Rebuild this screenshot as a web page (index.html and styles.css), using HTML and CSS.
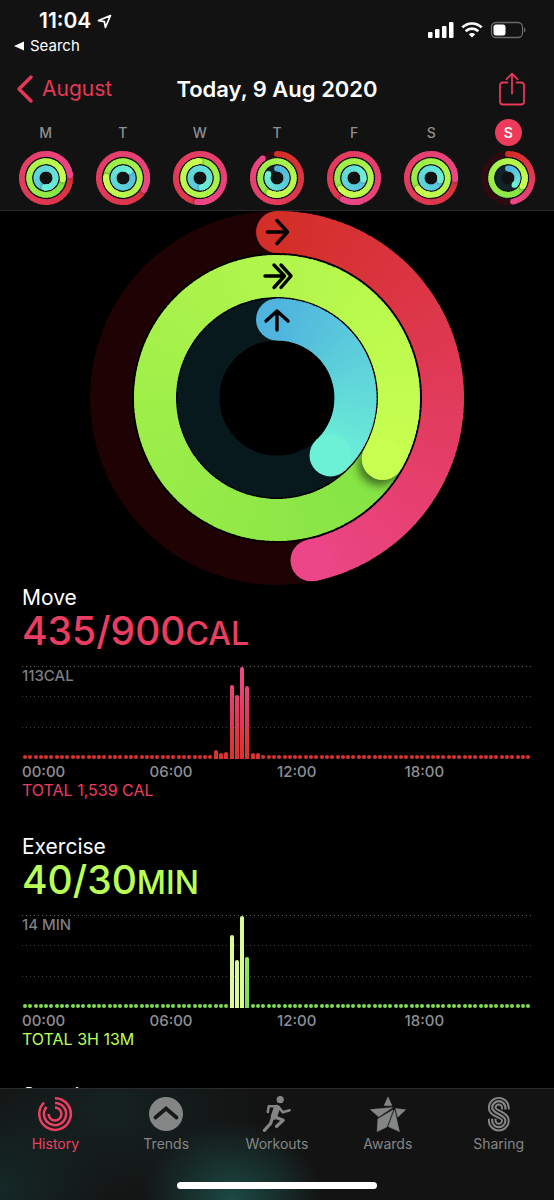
FILE: index.html
```html
<!DOCTYPE html>
<html lang="en">
<head>
	<meta charset="UTF-8">
	<meta name="viewport" content="width=device-width, initial-scale=1">
	<title>Activity</title>
	<link rel="stylesheet" href="styles.css">
</head>
<body>

	<header class="header">
		<div class="status">
			<div class="status-left">
				<div class="clock">
					<span>11:04</span>
					<svg width="15" height="15" viewBox="0 0 15 15"><path d="M13.5 1.5 L1.5 6.6 L7.4 7.6 L8.4 13.5 Z" fill="none" stroke="#fff" stroke-width="1.7" stroke-linejoin="round"/></svg>
				</div>
				<a class="back-app" href="#">
					<svg width="10" height="10" viewBox="0 0 10 10"><path d="M0 5 L10 0.5 V9.5 Z" fill="#fff"/></svg>
					<span>Search</span>
				</a>
			</div>
			<svg class="status-icons" width="98" height="18" viewBox="0 0 98 18">
				<g fill="#fff">
					<rect x="0" y="11" width="4.5" height="6" rx="1"/>
					<rect x="7" y="8" width="4.5" height="9" rx="1"/>
					<rect x="14" y="5" width="4.5" height="12" rx="1"/>
					<rect x="21" y="1" width="4.5" height="16" rx="1"/>
					<path d="M44 16.5 L40.8 13.2 A4.6 4.6 0 0 1 47.2 13.2 Z"/>
				</g>
				<g fill="none" stroke="#fff" stroke-width="2.7">
					<path d="M37.7 10.2 A9 9 0 0 1 50.3 10.2"/>
					<path d="M34.3 6.4 A14 14 0 0 1 53.7 6.4"/>
				</g>
				<rect x="63.5" y="1.5" width="31" height="15" rx="4.5" fill="none" stroke="#6a6a6a" stroke-width="1.3"/>
				<rect x="65.5" y="3.5" width="12" height="11" rx="2.5" fill="#fff"/>
				<path d="M96 6.5 A2.8 2.8 0 0 1 96 11.5 Z" fill="#6a6a6a"/>
			</svg>
		</div>

		<nav class="nav">
			<a class="nav-back" href="#">
				<svg width="17" height="28" viewBox="0 0 17 28"><path d="M15 2 L3 14 L15 26" fill="none" stroke="currentColor" stroke-width="3.4" stroke-linecap="round" stroke-linejoin="round"/></svg>
				<span>August</span>
			</a>
			<h1 class="nav-title">Today, 9 Aug 2020</h1>
			<button class="nav-share" type="button" aria-label="Share">
				<svg width="28" height="34" viewBox="0 0 28 34"><path d="M9.5 10.5 H5 A3 3 0 0 0 2 13.5 V29.5 A3 3 0 0 0 5 32.5 H23 A3 3 0 0 0 26 29.5 V13.5 A3 3 0 0 0 23 10.5 H18.5 M14 21.5 V2 M8.5 7.2 L14 1.7 L19.5 7.2" fill="none" stroke="currentColor" stroke-width="1.8" stroke-linecap="round" stroke-linejoin="round"/></svg>
			</button>
		</nav>

		<!-- data-ends: how far move, exercise and stand have gone, in degrees -->
		<div class="week">
			<button class="day" type="button"><span class="day-name">M</span><svg class="day-rings" data-ends="444,455,550"></svg></button>
			<button class="day" type="button"><span class="day-name">T</span><svg class="day-rings" data-ends="480,635,405"></svg></button>
			<button class="day" type="button"><span class="day-name">W</span><svg class="day-rings" data-ends="547,719,530"></svg></button>
			<button class="day" type="button"><span class="day-name">T</span><svg class="day-rings" data-ends="324,568,295"></svg></button>
			<button class="day" type="button"><span class="day-name">F</span><svg class="day-rings" data-ends="568,592,460"></svg></button>
			<button class="day" type="button"><span class="day-name">S</span><svg class="day-rings" data-ends="453,592,465"></svg></button>
			<button class="day" type="button"><span class="day-name day-today">S</span><svg class="day-rings" data-ends="168,480,137"></svg></button>
		</div>
	</header>

	<main class="content">
		<svg class="rings" data-ends="168,480,137"></svg>

		<section class="metric move">
			<h2>Move</h2>
			<p class="amount">435/900<span>CAL</span></p>
			<div class="chart">
				<span class="chart-max">113CAL</span>
				<div class="bars" data-bars="36:9,37:6,38:7,39:74,40:64,41:92,42:73,43:6,44:6"></div>
			</div>
			<div class="hours"><span>00:00</span><span>06:00</span><span>12:00</span><span>18:00</span></div>
			<p class="total">TOTAL 1,539 CAL</p>
		</section>

		<section class="metric exercise">
			<h2>Exercise</h2>
			<p class="amount">40/30<span>MIN</span></p>
			<div class="chart">
				<span class="chart-max">14 MIN</span>
				<div class="bars" data-bars="39:73:pale,40:48:pale,41:92:pale,42:51"></div>
			</div>
			<div class="hours"><span>00:00</span><span>06:00</span><span>12:00</span><span>18:00</span></div>
			<p class="total">TOTAL 3H 13M</p>
		</section>

		<section class="metric stand">
			<h2>Stand</h2>
		</section>
	</main>

	<footer class="footer">
		<nav class="tabs">
			<a class="tab tab-active" href="#">
				<svg viewBox="0 0 36 36" fill="none" stroke="currentColor" stroke-width="2.5">
					<path d="M18 2.2 A15.8 15.8 0 1 1 7 6.7"/>
					<path d="M18 6.9 A11.1 11.1 0 1 1 9.5 10.9"/>
					<path d="M18 11.6 A6.4 6.4 0 1 1 11.6 18"/>
				</svg>
				<span>History</span>
			</a>
			<a class="tab" href="#">
				<svg viewBox="0 0 36 36"><circle cx="18" cy="18" r="17" fill="currentColor"/><path d="M7.5 21.5 L18 12.5 L28.5 21.5" fill="none" stroke="#141a1a" stroke-width="3.8" stroke-linecap="round"/></svg>
				<span>Trends</span>
			</a>
			<a class="tab" href="#">
				<svg viewBox="0 0 36 36" fill="none" stroke="currentColor" stroke-linecap="round" stroke-linejoin="round">
					<circle cx="21.2" cy="3.7" r="3.6" fill="currentColor" stroke="none"/>
					<path d="M8.8 16 L9.8 10.3 L17 10.2 M19.8 11.3 L23.8 16.3 L30.6 14.3" stroke-width="2.6"/>
					<path d="M17.8 12 L15 20.5" stroke-width="6.4"/>
					<path d="M16 21 L24.2 24.3 L17.6 30.3 M13.7 21 L11.5 27.7 L5.4 34.3" stroke-width="3.2"/>
				</svg>
				<span>Workouts</span>
			</a>
			<a class="tab" href="#">
				<svg viewBox="0 0 36 36" fill="currentColor" stroke="currentColor" stroke-width="0.6" stroke-linejoin="round">
					<path d="M18 1 L14.2 9.6 H21.9 Z"/>
					<path d="M0.4 13.6 L22.5 11.6 L8.6 20.8 Z"/>
					<path d="M7.9 22.9 L23 13.9 L16.7 31 L7.2 35.6 Z"/>
					<path d="M24.5 14.2 L29.4 35.6 L18.4 30.6 Z"/>
					<path d="M25.6 12.6 L35.6 13.8 L27.8 21.1 Z"/>
				</svg>
				<span>Awards</span>
			</a>
			<a class="tab" href="#">
				<svg viewBox="0 0 36 36" fill="none">
					<path d="M24.4 13.5 V11.8 A6.6 6.6 0 0 0 11.2 11.8 C11.2 18.2 24.4 18.2 24.4 24.5 A6.6 6.6 0 0 1 11.2 24.5 V22.8" stroke="currentColor" stroke-width="8.6"/>
					<path d="M24.4 14 V11.8 A6.6 6.6 0 0 0 11.2 11.8 C11.2 18.2 24.4 18.2 24.4 24.5 A6.6 6.6 0 0 1 11.2 24.5 V22.3" stroke="#131313" stroke-width="4.8"/>
					<path d="M24.4 13.5 V11.8 A6.6 6.6 0 0 0 11.2 11.8 C11.2 18.2 24.4 18.2 24.4 24.5 A6.6 6.6 0 0 1 11.2 24.5 V22.8" stroke="currentColor" stroke-width="2.2"/>
				</svg>
				<span>Sharing</span>
			</a>
		</nav>
		<div class="home-bar"></div>
	</footer>

	<script src="script.js"></script>
</body>
</html>
```
FILE: styles.css
```css
html {
	height: 100%;
}

body {
	margin: 0;
	height: 100%;
	display: flex;
	flex-direction: column;
	background: #000;
	color: #fff;
	font-family: Inter, "Liberation Sans", sans-serif;
	overflow: hidden;
}

h1, h2, p {
	margin: 0;
	font-weight: 400;
}

a {
	color: inherit;
	text-decoration: none;
}

button {
	margin: 0;
	padding: 0;
	border: 0;
	background: none;
	color: inherit;
	font: inherit;
}

svg {
	display: block;
}

/* header */

.header {
	flex: none;
	background: #121212;
	border-bottom: 1px solid #2b2b2b;
}

.status {
	display: flex;
	justify-content: space-between;
	padding: 8px 28px 0 14px;
}

.clock {
	display: flex;
	align-items: center;
	gap: 6px;
	padding-left: 25px;
	font-size: 21px;
	line-height: 26px;
	font-weight: 600;
}

.back-app {
	display: flex;
	align-items: center;
	gap: 6px;
	font-size: 15px;
	line-height: 24px;
}

.status-icons {
	margin-top: 13px;
}

.nav {
	display: grid;
	grid-template-columns: 1fr auto 1fr;
	align-items: center;
	height: 61px;
	padding: 0 16px;
}

.nav-back {
	display: flex;
	align-items: center;
	gap: 9px;
	color: #e63757;
	font-size: 21px;
}

.nav-title {
	font-size: 22px;
	font-weight: 600;
}

.nav-share {
	justify-self: end;
	margin-right: 12px;
	color: #e63757;
}

.week {
	display: flex;
	padding: 0 7px 5px;
}

.day {
	flex: 1;
	display: flex;
	flex-direction: column;
	align-items: center;
	gap: 5px;
}

.day-name {
	width: 27px;
	line-height: 27px;
	border-radius: 50%;
	color: #8e8e93;
	font-size: 14px;
	font-weight: 500;
}

.day-today {
	background: #ee3a5b;
	color: #fff;
	font-weight: 600;
}

.day-rings {
	width: 54px;
	height: 54px;
}

/* content */

.content {
	flex: 1;
	min-height: 0;
	overflow: hidden;
}

.rings {
	width: 68%;
	max-width: 374px;
	aspect-ratio: 1;
	margin: 0 auto;
}

.metric {
	padding: 0 22px 35px;
}

.metric h2 {
	font-size: 21px;
	line-height: 26px;
}

.amount {
	font-size: 39px;
	line-height: 40px;
	font-weight: 500;
}

.amount span {
	font-size: 32px;
}

.move .amount,
.move .total {
	color: #ea3d60;
}

.exercise .amount,
.exercise .total {
	color: #baff55;
}

.chart {
	position: relative;
	height: 93px;
	margin-top: 12px;
	background:
		repeating-linear-gradient(90deg, #666 0 1px, transparent 1px 4px) 0 0 / 100% 1px no-repeat,
		repeating-linear-gradient(90deg, #444 0 1px, transparent 1px 4px) 0 30px / 100% 1px no-repeat,
		repeating-linear-gradient(90deg, #444 0 1px, transparent 1px 4px) 0 61px / 100% 1px no-repeat;
}

.chart-max {
	position: absolute;
	top: 1px;
	left: 0;
	color: #7d7d82;
	font-size: 15px;
	line-height: 18px;
	font-weight: 500;
}

.bars {
	display: flex;
	justify-content: space-between;
	align-items: flex-end;
	height: 93px;
	padding: 0 1px;
}

.bar {
	width: 4px;
	height: 4px;
	border-radius: 2px;
	background: linear-gradient(0deg, #d9322d, #e5385a 45px, #ec4a8c 92px) bottom / 100% 92px;
}

.bar-tall {
	border-radius: 2px 2px 0 0;
}

.exercise .bar {
	background: linear-gradient(0deg, #7fdc50, #a4f657 92px) bottom / 100% 92px;
}

.exercise .bar-pale {
	background: #dcfb95;
}

.hours {
	display: grid;
	grid-template-columns: repeat(4, 1fr);
	margin-top: 3px;
	color: #8e8e93;
	font-size: 15px;
	line-height: 19px;
	font-weight: 500;
}

.total {
	font-size: 16px;
	line-height: 18px;
}

/* tab bar */

.footer {
	flex: none;
	padding-bottom: 11px;
	border-top: 1px solid #2b2b2b;
	background:
		radial-gradient(90px 80px at 42% 100%, #1c4a44, transparent),
		radial-gradient(110px 90px at 0 90%, #142927, transparent),
		radial-gradient(150px 100px at 20% 20%, #152221, transparent),
		#131313;
}

.tabs {
	display: flex;
}

.tab {
	flex: 1;
	display: flex;
	flex-direction: column;
	align-items: center;
	gap: 2px;
	padding-top: 7px;
	color: #848686;
	font-size: 14px;
	line-height: 20px;
}

.tab svg {
	width: 36px;
	height: 36px;
}

.tab-active {
	color: #ee3f62;
}

.home-bar {
	width: 36%;
	height: 7px;
	margin: 28px auto 0;
	border-radius: 4px;
	background: #fff;
}
```
FILE: script.js
```js
var NS = 'http://www.w3.org/2000/svg';
var clipCount = 0;

// outer to inner: radius in the big drawing, radius in the small one, colours
var RINGS = [
	{ r: 166, small: 24.1, from: [212, 46, 40], to: [236, 70, 136], track: '#1f0204', smallTrack: '#2e0b10' },
	{ r: 122, small: 16.8, from: [108, 218, 65], to: [200, 255, 80], track: '#0f1f05', smallTrack: '#16240c' },
	{ r: 78.5, small: 9.5, from: [80, 180, 222], to: [108, 240, 214], track: '#08191e', smallTrack: '#10242a' }
];

function add(parent, name, attrs) {
	var el = document.createElementNS(NS, name);
	for (var key in attrs) {
		el.setAttribute(key, attrs[key]);
	}
	parent.appendChild(el);
	return el;
}

function point(r, deg) {
	var a = (deg - 90) * Math.PI / 180;
	return [(r * Math.cos(a)).toFixed(2), (r * Math.sin(a)).toFixed(2)];
}

function mix(from, to, t) {
	return 'rgb(' + from.map(function (v, i) {
		return Math.round(v + (to[i] - v) * t);
	}).join(',') + ')';
}

function drawRing(svg, ring, r, width, end, track) {
	var start = Math.max(0, end - 360);
	var big = width > 10;
	add(svg, 'circle', { r: r, fill: 'none', stroke: track, 'stroke-width': width });

	// keeps the shadow of the tip inside its own ring
	var id = 'ring' + (clipCount++);
	var clip = add(svg, 'clipPath', { id: id });
	var o = r + width / 2, n = r - width / 2;
	add(clip, 'path', {
		d: 'M0 ' + -o + 'A' + o + ' ' + o + ' 0 1 1 0 ' + o + 'A' + o + ' ' + o + ' 0 1 1 0 ' + -o +
			'M0 ' + -n + 'A' + n + ' ' + n + ' 0 1 1 0 ' + n + 'A' + n + ' ' + n + ' 0 1 1 0 ' + -n,
		'clip-rule': 'evenodd'
	});

	if (start === 0) {
		add(svg, 'circle', { cx: 0, cy: -r, r: width / 2, fill: mix(ring.from, ring.to, 0) });
	}

	// pieces overlap by about a pixel, so the track never shows between them
	var step = big ? 2 : 8;
	var reach = step + 70 / r;
	function arc(a, b) {
		for (var d = a; d < b; d += step) {
			var p = point(r, d), q = point(r, Math.min(d + reach, end));
			add(svg, 'path', {
				d: 'M' + p + 'A' + r + ' ' + r + ' 0 0 1 ' + q,
				fill: 'none',
				stroke: mix(ring.from, ring.to, d / end),
				'stroke-width': width
			});
		}
	}

	arc(start, end);
	if (start > 0) {
		var shade = point(r, end + 3);
		var g = add(svg, 'g', { 'clip-path': 'url(#' + id + ')' });
		add(g, 'circle', {
			cx: shade[0], cy: shade[1], r: width / 2, fill: '#000', opacity: big ? 0.5 : 0.3,
			style: 'filter: blur(' + (big ? 4 : 1) + 'px)'
		});
		// cover the shadow again behind the tip
		arc(end - (big ? 24 : 48), end);
	}
	var tip = point(r, end);
	add(svg, 'circle', { cx: tip[0], cy: tip[1], r: width / 2, fill: mix(ring.from, ring.to, 1) });
}

document.querySelectorAll('.rings').forEach(function (svg) {
	svg.setAttribute('viewBox', '-187 -187 374 374');
	svg.dataset.ends.split(',').forEach(function (end, i) {
		drawRing(svg, RINGS[i], RINGS[i].r, 42, +end, RINGS[i].track);
	});
	var icons = add(svg, 'g', {
		fill: 'none', stroke: '#000', 'stroke-width': 3.4,
		'stroke-linecap': 'round', 'stroke-linejoin': 'round'
	});
	add(icons, 'path', { d: 'M-9.5 -166 H10 M0 -177.5 L10.5 -166 L0 -154.5' });
	add(icons, 'path', { d: 'M-12 -122 H7 M-3 -133 L7.5 -122 L-3 -110.5 M4 -133 L14 -122 L4 -110.5' });
	add(icons, 'path', { d: 'M0 -68 V-86.5 M-11 -77 L0 -87 L11 -77' });
});

document.querySelectorAll('.day-rings').forEach(function (svg) {
	svg.setAttribute('viewBox', '-27 -27 54 54');
	svg.dataset.ends.split(',').forEach(function (end, i) {
		drawRing(svg, RINGS[i], RINGS[i].small, 5.8, +end, RINGS[i].smallTrack);
	});
});

// one bar per quarter of an hour
document.querySelectorAll('.bars').forEach(function (box) {
	var values = {};
	box.dataset.bars.split(',').forEach(function (item) {
		var parts = item.split(':');
		values[parts[0]] = parts;
	});
	for (var i = 0; i < 96; i++) {
		var bar = document.createElement('div');
		bar.className = 'bar';
		if (values[i]) {
			bar.className += ' bar-tall' + (values[i][2] ? ' bar-' + values[i][2] : '');
			bar.style.height = values[i][1] + 'px';
		}
		box.appendChild(bar);
	}
});
```
